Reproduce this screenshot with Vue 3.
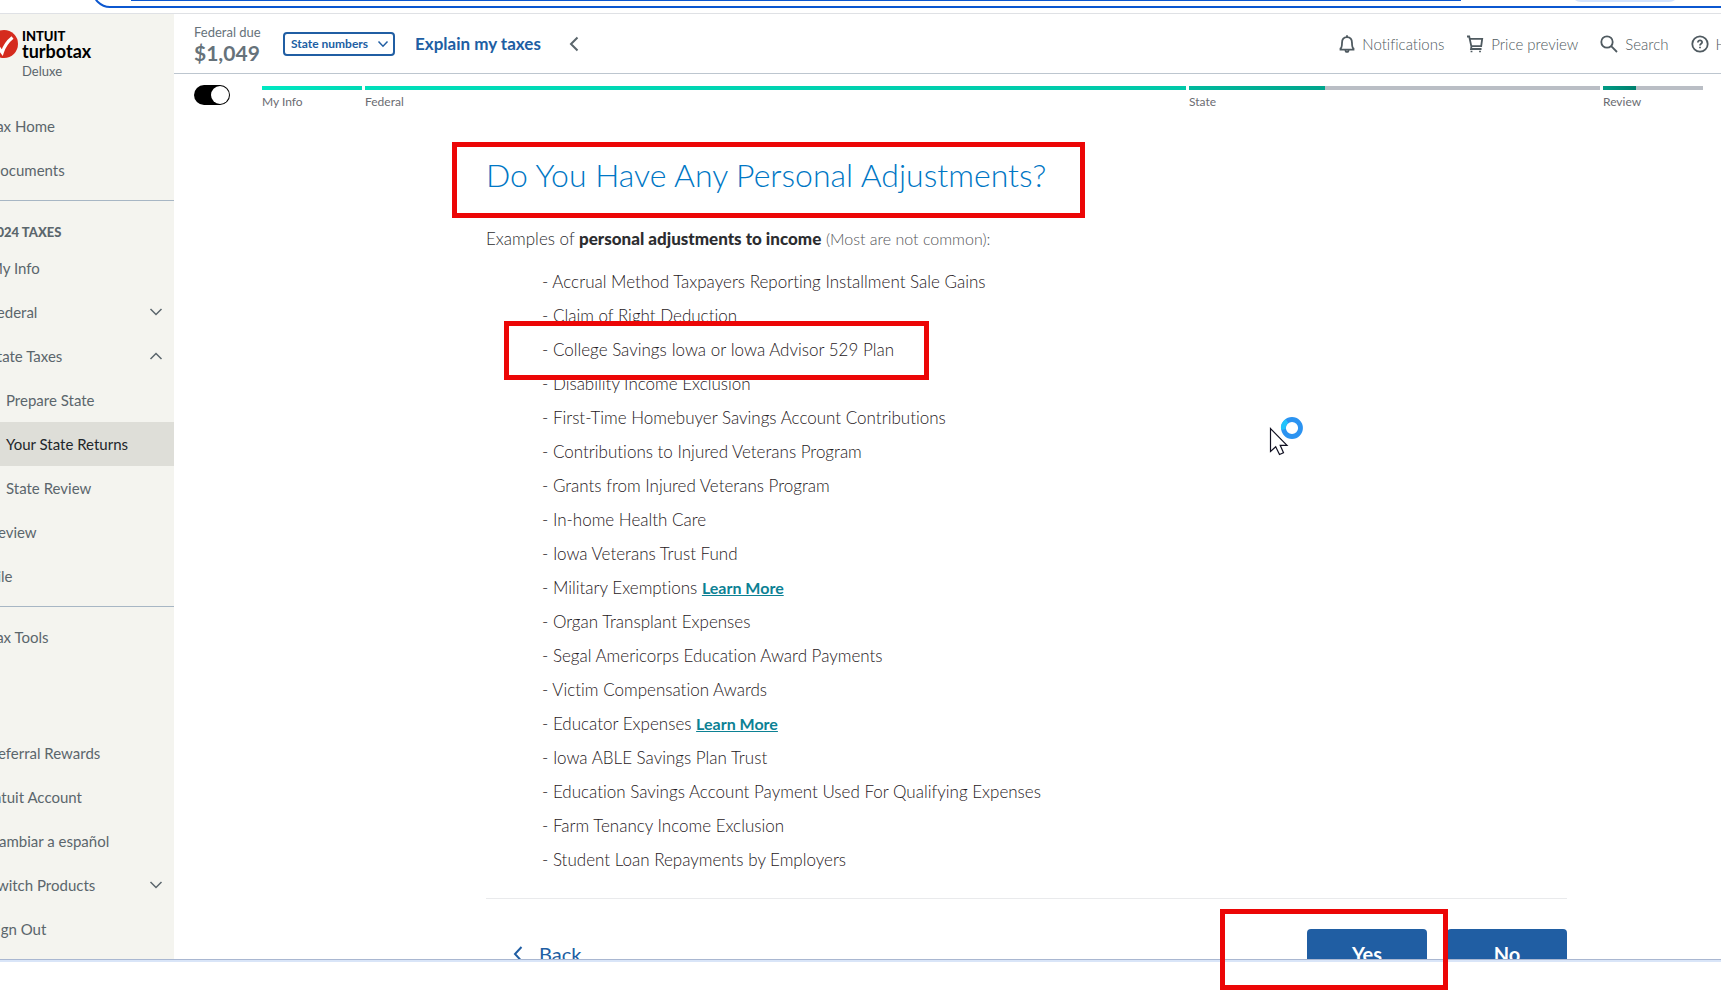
<script setup>
import { ref } from 'vue'

const savedState = ref(true)

const topLinks = [{ label: 'Tax Home' }, { label: 'Documents' }]
const taxLinks = [
  { label: 'My Info' },
  { label: 'Federal', arrow: 'down' },
  { label: 'State Taxes', arrow: 'up' },
  { label: 'Prepare State', sub: true },
  { label: 'Your State Returns', sub: true, active: true },
  { label: 'State Review', sub: true },
  { label: 'Review' },
  { label: 'File' }
]
const toolLinks = [{ label: 'Tax Tools', arrow: 'down' }]
const accountLinks = [
  { label: 'Referral Rewards' },
  { label: 'Intuit Account' },
  { label: 'Cambiar a español' },
  { label: 'Switch Products', arrow: 'down' },
  { label: 'Sign Out' }
]
const groups = [
  { key: 'top', links: topLinks },
  { key: 'taxes', title: '2024 TAXES', links: taxLinks },
  { key: 'tools', links: toolLinks },
  { key: 'account', links: accountLinks }
]

const steps = [
  { label: 'My Info', weight: 100, done: 100, tone: 'mint' },
  { label: 'Federal', weight: 821, done: 100, tone: 'aqua' },
  { label: 'State', weight: 411, done: 33, tone: 'teal' },
  { label: 'Review', weight: 100, done: 33, tone: 'deep' }
]

const adjustments = [
  { text: 'Accrual Method Taxpayers Reporting Installment Sale Gains' },
  { text: 'Claim of Right Deduction' },
  { text: 'College Savings Iowa or Iowa Advisor 529 Plan' },
  { text: 'Disability Income Exclusion' },
  { text: 'First-Time Homebuyer Savings Account Contributions' },
  { text: 'Contributions to Injured Veterans Program' },
  { text: 'Grants from Injured Veterans Program' },
  { text: 'In-home Health Care' },
  { text: 'Iowa Veterans Trust Fund' },
  { text: 'Military Exemptions', more: true },
  { text: 'Organ Transplant Expenses' },
  { text: 'Segal Americorps Education Award Payments' },
  { text: 'Victim Compensation Awards' },
  { text: 'Educator Expenses', more: true },
  { text: 'Iowa ABLE Savings Plan Trust' },
  { text: 'Education Savings Account Payment Used For Qualifying Expenses' },
  { text: 'Farm Tenancy Income Exclusion' },
  { text: 'Student Loan Repayments by Employers' }
]
</script>

<template>
  <div class="screen">
    <div class="browser-edge">
      <div class="address-outline"></div>
      <div class="address-line"></div>
      <div class="address-chip"></div>
    </div>

    <div class="window">
      <aside class="sidebar">
        <div class="brand">
          <svg class="brand-mark" viewBox="0 0 28 28" aria-hidden="true">
            <circle cx="14" cy="14" r="14" fill="#d52b1e" />
            <path d="M8.500 17.500 12.200 22.500C14 17 17.500 11.500 22.500 7.500" fill="none" stroke="#fff" stroke-width="3.200" />
          </svg>
          <div class="brand-words">
            <span class="brand-intuit">INTUIT</span>
            <span class="brand-name">turbotax</span>
            <span class="brand-tier">Deluxe</span>
          </div>
        </div>
        <nav class="side-nav" aria-label="Main">
          <section v-for="g in groups" :key="g.key" :class="['group', g.key]">
            <h2 v-if="g.title" class="group-title">{{ g.title }}</h2>
            <a
              v-for="l in g.links"
              :key="l.label"
              href="#"
              :class="['side-link', { sub: l.sub, active: l.active }]"
            >
              <span>{{ l.label }}</span>
              <svg v-if="l.arrow" class="side-arrow" viewBox="0 0 14 14" aria-hidden="true">
                <path :d="l.arrow === 'down' ? 'M1.500 4 7 9.500 12.500 4' : 'M1.500 10 7 4.500 12.500 10'" />
              </svg>
            </a>
          </section>
        </nav>
      </aside>

      <div class="main">
        <header class="header">
          <div class="due">
            <span class="due-label">Federal due</span>
            <span class="due-amount">$1,049</span>
          </div>
          <button type="button" class="state-button">
            State numbers
            <svg viewBox="0 0 12 12" aria-hidden="true"><path d="M1.500 3.500 6 8.200 10.500 3.500" /></svg>
          </button>
          <a href="#" class="explain">Explain my taxes</a>
          <button type="button" class="collapse" aria-label="Collapse">
            <svg viewBox="0 0 10 16" aria-hidden="true"><path d="M8.500 1.500 2 8 8.500 14.500" /></svg>
          </button>
          <nav class="tools" aria-label="Tools">
            <a href="#" class="tool">
              <svg class="bell" viewBox="0 0 16 18" aria-hidden="true">
                <path d="M1.500 14.700V13.500C3 12.500 3 11 3 8C3 4.500 5 2.200 8 2.200S13 4.500 13 8C13 11 13 12.500 14.500 13.500V14.700Z" />
                <path d="M8 2V.3M6.500 15C6.500 17.600 9.500 17.600 9.500 15" />
              </svg>
              Notifications
            </a>
            <a href="#" class="tool">
              <svg viewBox="0 0 18 18" aria-hidden="true">
                <path d="M1 1.500H3.200L5.300 11.200H15.200L16.200 3.800H4M5.500 11.200L5 14H15.500" />
                <path d="M5.500 15.700V17.200M14 15.700V17.200" />
              </svg>
              Price preview
            </a>
            <a href="#" class="tool">
              <svg viewBox="0 0 18 18" aria-hidden="true">
                <circle cx="7" cy="7" r="5.700" />
                <path d="M11.200 11.200 17 17" />
              </svg>
              Search
            </a>
            <a href="#" class="tool">
              <svg viewBox="0 0 18 18" aria-hidden="true">
                <circle cx="9" cy="9" r="7.700" />
                <path d="M6.900 7.400C6.900 4.600 11.200 4.800 11.100 7.300C11 8.900 9 8.700 9 10.500" />
                <path d="M9 11.800V13.300" />
              </svg>
              Help
            </a>
          </nav>
        </header>

        <div class="progress-row">
          <label class="toggle">
            <input v-model="savedState" type="checkbox" role="switch" aria-label="Show progress" />
          </label>
          <ol class="steps">
            <li v-for="s in steps" :key="s.label" class="step" :style="{ flexGrow: s.weight }">
              <div class="track"><div :class="['fill', s.tone]" :style="{ width: s.done + '%' }"></div></div>
              <span class="step-label">{{ s.label }}</span>
            </li>
          </ol>
        </div>

        <main class="content">
          <h1 class="title">Do You Have Any Personal Adjustments?</h1>
          <p class="intro">
            Examples of <strong>personal adjustments to income</strong> <span class="aside">(Most are not common):</span>
          </p>
          <ul class="list">
            <li v-for="a in adjustments" :key="a.text">
              - {{ a.text }} <a v-if="a.more" href="#" class="more">Learn More</a>
            </li>
          </ul>
          <div class="actions">
            <a href="#" class="back">
              <svg viewBox="0 0 10 16" aria-hidden="true"><path d="M8.500 1 2 8 8.500 15" /></svg>
              Back
            </a>
            <div class="answers">
              <button type="button" class="answer">Yes</button>
              <button type="button" class="answer">No</button>
            </div>
          </div>
        </main>
      </div>
    </div>

    <div class="below"></div>

    <div class="mark mark-title"></div>
    <div class="mark mark-plan"></div>
    <div class="mark mark-yes"></div>
    <svg class="cursor" viewBox="0 0 36 42" aria-hidden="true">
      <path d="M2.500 11.500V34.500L7.700 29.800 11.500 37.500 15.500 35.700 12.200 28.300H19Z" fill="#fff" stroke="#111122" stroke-width="1.200" />
      <circle cx="24" cy="11" r="8.500" fill="none" stroke="#2b93f1" stroke-width="4.800" />
      <path d="M15.500 12.500A8.500 8.500 0 0 1 19 4" fill="none" stroke="#22c3fb" stroke-width="4.800" />
    </svg>
  </div>
</template>

<style>
html,
body {
  margin: 0;
  background: #fff;
  overflow: hidden;
}
</style>

<style scoped>
.screen {
  position: relative;
  display: flex;
  flex-direction: column;
  height: 100vh;
  overflow: hidden;
  background: #fff;
  font-family: Lato, "Open Sans", sans-serif;
  font-variant-ligatures: none;
  color: #393a3d;
}
a {
  color: inherit;
  text-decoration: none;
}
button {
  font-family: inherit;
  cursor: pointer;
}
svg {
  flex: none;
  fill: none;
  stroke: currentColor;
}

.browser-edge {
  position: relative;
  flex: none;
  height: 13px;
  overflow: hidden;
  border-bottom: 1px solid #dfe1e5;
}
.address-outline {
  position: absolute;
  left: 92px;
  right: -40px;
  bottom: 5px;
  height: 36px;
  box-sizing: border-box;
  border: 2px solid #0b57d0;
  border-radius: 18px;
}
.address-line {
  position: absolute;
  top: 0;
  left: 131px;
  right: 260px;
  height: 1px;
  background: #0b57d0;
}
.address-chip {
  position: absolute;
  top: -18px;
  right: 42px;
  width: 108px;
  height: 20px;
  border-radius: 10px;
  background: #d3e3fd;
}

.window {
  flex: 1;
  min-height: 0;
  display: flex;
  overflow: hidden;
  border-bottom: 1px solid #a9b7d1;
}
.below {
  flex: none;
  height: 27px;
  border-top: 2px solid #d9e5f8;
  padding-bottom: 1px;
}

.sidebar {
  flex: none;
  width: 174px;
  overflow: hidden;
  background: #f4f4ef;
  color: #5b666c;
}
.brand {
  display: flex;
  gap: 4px;
  height: 90px;
  margin-left: -10px;
  padding-top: 15px;
  box-sizing: border-box;
}
.brand-mark {
  width: 28px;
  height: 28px;
  margin-top: 1px;
  stroke: none;
}
.brand-words {
  display: flex;
  flex-direction: column;
}
.brand-intuit {
  font-size: 13px;
  line-height: 14px;
  font-weight: 900;
  color: #000;
}
.brand-name {
  font-size: 18px;
  line-height: 17px;
  font-weight: 700;
  color: #000;
}
.brand-tier {
  font-size: 13px;
  line-height: 22px;
}
.group {
  display: flex;
  flex-direction: column;
}
.group.top {
  padding-bottom: 8px;
  border-bottom: 1px solid #a7b6c4;
}
.group.taxes {
  padding: 16px 0 8px;
  border-bottom: 1px solid #a7b6c4;
}
.group.tools {
  padding: 8px 0 72px;
}
.group-title {
  margin: 0 0 0 -11px;
  height: 29px;
  font-size: 13px;
  line-height: 30px;
  font-weight: 900;
}
.side-link {
  display: flex;
  align-items: center;
  justify-content: space-between;
  height: 44px;
  padding-right: 11px;
  font-size: 15px;
  line-height: 20px;
  white-space: nowrap;
}
.side-link span {
  margin-left: -11px;
}
.side-link.sub span {
  margin-left: 6px;
}
.side-link.active {
  background: #deded8;
  color: #21262a;
}
.side-arrow {
  width: 14px;
  height: 14px;
  stroke-width: 1.500;
}

.main {
  flex: 1;
  min-width: 0;
  overflow: hidden;
}
.header {
  display: flex;
  align-items: center;
  height: 59px;
  padding-left: 20px;
  border-bottom: 1px solid #bdc6cf;
  color: #4f5a60;
  white-space: nowrap;
}
.due {
  display: flex;
  flex-direction: column;
  width: 68px;
  color: #66727a;
}
.due-label {
  font-size: 13px;
  line-height: 18px;
}
.due-amount {
  font-size: 21px;
  line-height: 23px;
  font-weight: 700;
}
.state-button {
  display: flex;
  align-items: center;
  justify-content: space-between;
  width: 112px;
  height: 24px;
  margin-left: 21px;
  padding: 0 4px 0 6px;
  border: 2px solid #205ea3;
  border-radius: 4px;
  background: #fff;
  color: #205ea3;
  font-size: 12px;
  font-weight: 700;
}
.state-button svg {
  width: 12px;
  height: 12px;
  stroke-width: 1.500;
}
.explain {
  margin-left: 20px;
  color: #205ea3;
  font-size: 17px;
  font-weight: 700;
}
.collapse {
  margin-left: 28px;
  padding: 0;
  border: 0;
  background: none;
  color: #5b666c;
}
.collapse svg {
  display: block;
  width: 10px;
  height: 16px;
  stroke-width: 2;
}
.tools {
  display: flex;
  gap: 22px;
  margin-left: auto;
  margin-right: -25px;
}
.tool {
  display: flex;
  align-items: center;
  gap: 7px;
  font-size: 15px;
  font-weight: 300;
}
.tool svg {
  width: 18px;
  height: 18px;
  stroke-width: 1.800;
}
.tool svg.bell {
  width: 16px;
}

.progress-row {
  display: flex;
  align-items: flex-start;
  padding: 11px 18px 0 20px;
}
.toggle input {
  appearance: none;
  display: block;
  width: 36px;
  height: 20px;
  margin: 0;
  border-radius: 10px;
  background: #000;
}
.toggle input::before {
  content: "";
  display: block;
  width: 18px;
  height: 18px;
  margin: 1px;
  border-radius: 50%;
  background: #fff;
}
.toggle input:checked::before {
  margin-left: 17px;
}
.steps {
  flex: 1;
  display: flex;
  gap: 3px;
  margin: 1px 0 0 32px;
  padding: 0;
  list-style: none;
}
.step {
  flex: 1 1 0;
  min-width: 0;
}
.track {
  height: 4px;
  background: #babec5;
}
.fill {
  height: 4px;
}
.mint { background: linear-gradient(90deg, #00e8c2, #00d9b5); }
.aqua { background: linear-gradient(90deg, #00dfba, #00c8a8); }
.teal { background: linear-gradient(90deg, #00b99d, #00a58c); }
.deep { background: linear-gradient(90deg, #009b84, #00806e); }
.step-label {
  display: block;
  margin-top: 4px;
  font-size: 12px;
  line-height: 16px;
  color: #6b6c72;
}

.content {
  padding: 41px 154px 0 312px;
}
.title {
  margin: 0;
  font-size: 32px;
  line-height: 48px;
  font-weight: 300;
  color: #0077c5;
  white-space: nowrap;
}
.intro {
  margin: 27px 0 0;
  font-size: 17px;
  line-height: 26px;
  font-weight: 300;
  color: #2c2d30;
}
.intro strong {
  font-weight: 900;
}
.aside {
  font-size: 16px;
  color: #55565a;
}
.list {
  margin: 13px 0 0;
  padding: 0 0 21px 56px;
  border-bottom: 1px solid #e9eaec;
  list-style: none;
  font-size: 17px;
  line-height: 34px;
  font-weight: 300;
  color: #1f2023;
}
.more {
  color: #0c8194;
  font-size: 16px;
  font-weight: 700;
  text-decoration: underline;
}
.actions {
  display: flex;
  justify-content: space-between;
  padding-top: 30px;
}
.back {
  display: flex;
  align-items: center;
  gap: 16px;
  height: 50px;
  padding-left: 27px;
  color: #205ea3;
  font-size: 20px;
}
.back svg {
  width: 10px;
  height: 16px;
  stroke-width: 2;
}
.answers {
  display: flex;
  gap: 20px;
}
.answer {
  width: 120px;
  height: 50px;
  border: 0;
  border-radius: 4px;
  background: #205ea3;
  color: #fff;
  font-size: 20px;
  font-weight: 700;
}

/* Highlight boxes and pointer drawn over the page */
.mark {
  position: absolute;
  box-sizing: border-box;
  border: 5px solid #ec0606;
}
.mark-title {
  left: 452px;
  top: 142px;
  width: 633px;
  height: 76px;
}
.mark-plan {
  left: 504px;
  top: 321px;
  width: 425px;
  height: 59px;
}
.mark-yes {
  left: 1220px;
  top: 909px;
  width: 228px;
  height: 81px;
}
.cursor {
  position: absolute;
  left: 1268px;
  top: 417px;
  width: 36px;
  height: 42px;
}
</style>
